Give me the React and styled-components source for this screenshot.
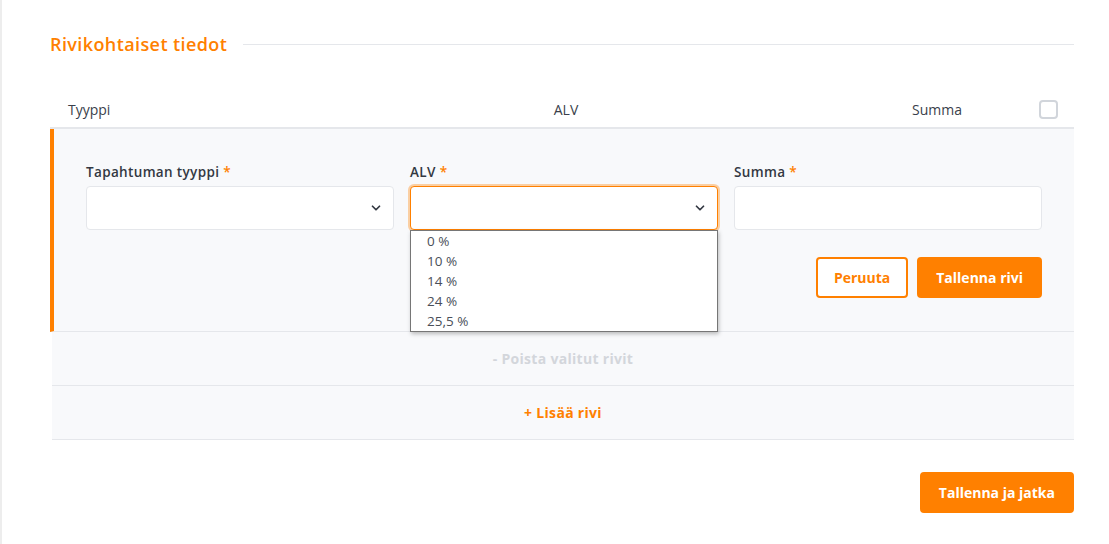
import React from "react";
import styled, { createGlobalStyle } from "styled-components";

const Global = createGlobalStyle`
  html, body { margin: 0; padding: 0; background: #fff; }
  body { font-family: "Open Sans", "Liberation Sans", sans-serif; color: #3a3f4b; }
  * { box-sizing: border-box; }
`;

const ORANGE = "#ff8000";

const Page = styled.div`
  min-height: 544px;
  border-left: 2px solid #ededed;
  padding: 32px 35px 30px 48px;
`;

const SectionTitle = styled.div`
  display: flex;
  align-items: center;
  gap: 16px;
  height: 24px;
`;

const TitleText = styled.h2`
  margin: 0;
  font-size: 18px;
  font-weight: 600;
  color: ${ORANGE};
  letter-spacing: 0.4px;
  white-space: nowrap;
`;

const TitleLine = styled.div`
  flex: 1;
  height: 1px;
  background: #e5e7eb;
`;

const Table = styled.div`
  margin-top: 39px;
`;

const HeadRow = styled.div`
  display: grid;
  grid-template-columns: 1fr 1fr 1fr 36px;
  align-items: center;
  height: 34px;
  padding-bottom: 4px;
  border-bottom: 2px solid #e5e7eb;
  padding-left: 18px;
  font-size: 14px;
  color: #3a3f4b;
`;

const HeadCell = styled.div`
  text-align: ${(p) => p.$align || "left"};
  padding-right: ${(p) => p.$pr || 0}px;
  padding-left: ${(p) => p.$pl || 0}px;
`;

const Checkbox = styled.span`
  display: block;
  width: 19px;
  height: 19px;
  border: 2px solid #d1d5db;
  border-radius: 4px;
  background: #fff;
  justify-self: end;
  margin-right: 16px;
`;

const EditRow = styled.div`
  background: #f8f9fb;
  border-left: 4px solid ${ORANGE};
  border-bottom: 1px solid #e5e7eb;
  padding: 35px 32px 33px 32px;
`;

const Fields = styled.div`
  display: grid;
  grid-template-columns: repeat(3, 1fr);
  gap: 16px;
`;

const Field = styled.div`
  display: flex;
  flex-direction: column;
  position: relative;
`;

const Label = styled.label`
  font-size: 13.5px;
  font-weight: 600;
  letter-spacing: 0.35px;
  color: #333842;
  height: 16px;
  line-height: 16px;
  margin-bottom: 6px;
`;

const Req = styled.span`
  color: ${ORANGE};
  margin-left: 4px;
`;

const Box = styled.div`
  height: 44px;
  background: #fff;
  border: 1px solid ${(p) => (p.$focus ? ORANGE : "#e5e7eb")};
  border-radius: 4px;
  box-shadow: ${(p) => (p.$focus ? "0 0 0 2px rgba(255,128,0,0.35)" : "none")};
  display: flex;
  align-items: center;
  justify-content: flex-end;
  padding-right: 10px;
`;

const Menu = styled.ul`
  position: absolute;
  top: 66px;
  left: 0;
  right: 0;
  margin: 0;
  padding: 0 0 0 16px;
  list-style: none;
  background: #fff;
  border: 1px solid #767676;
  box-shadow: 1px 2px 4px rgba(0,0,0,0.25);
  z-index: 5;
`;

const Option = styled.li`
  height: 20px;
  line-height: 20px;
  font-size: 13.5px;
  color: #4a4f59;
`;

const Actions = styled.div`
  display: flex;
  justify-content: flex-end;
  gap: 9px;
  margin-top: 27px;
`;

const Button = styled.button`
  height: 41px;
  padding: 0 ${(p) => p.$px || 18}px;
  border-radius: 4px;
  font-family: "Open Sans", "Liberation Sans", sans-serif;
  font-size: 14px;
  font-weight: 700;
  border: 2px solid ${ORANGE};
  background: ${(p) => (p.$primary ? ORANGE : "#fff")};
  color: ${(p) => (p.$primary ? "#fff" : ORANGE)};
  cursor: pointer;
`;

const LinkRow = styled.div`
  margin-left: 2px;
  height: 54px;
  background: #f8f9fb;
  border-bottom: 1px solid #e5e7eb;
  display: flex;
  align-items: center;
  justify-content: center;
  font-size: 14px;
  font-weight: 700;
  letter-spacing: 0.3px;
  color: ${(p) => (p.$muted ? "#d3d6db" : ORANGE)};
`;

const Footer = styled.div`
  display: flex;
  justify-content: flex-end;
  margin-top: 32px;
`;

const Chevron = () => (
  <svg width="14" height="14" viewBox="0 0 24 24" fill="none" stroke="#333842" strokeWidth="3" strokeLinecap="round" strokeLinejoin="round">
    <path d="M6 9l6 6 6-6" />
  </svg>
);

export default function App() {
  return (
    <>
      <Global />
      <Page>
        <SectionTitle>
          <TitleText>Rivikohtaiset tiedot</TitleText>
          <TitleLine />
        </SectionTitle>
        <Table>
          <HeadRow>
            <HeadCell>Tyyppi</HeadCell>
            <HeadCell $align="center" $pl={26}>ALV</HeadCell>
            <HeadCell $align="right" $pr={76}>Summa</HeadCell>
            <Checkbox />
          </HeadRow>
          <EditRow>
            <Fields>
              <Field>
                <Label>Tapahtuman tyyppi<Req>*</Req></Label>
                <Box><Chevron /></Box>
              </Field>
              <Field>
                <Label>ALV<Req>*</Req></Label>
                <Box $focus><Chevron /></Box>
                <Menu>
                  {["0 %", "10 %", "14 %", "24 %", "25,5 %"].map((o) => (
                    <Option key={o}>{o}</Option>
                  ))}
                </Menu>
              </Field>
              <Field>
                <Label>Summa<Req>*</Req></Label>
                <Box />
              </Field>
            </Fields>
            <Actions>
              <Button $px={16}>Peruuta</Button>
              <Button $primary $px={17}>Tallenna rivi</Button>
            </Actions>
          </EditRow>
          <LinkRow $muted>- Poista valitut rivit</LinkRow>
          <LinkRow>+ Lisää rivi</LinkRow>
        </Table>
        <Footer>
          <Button $primary $px={17}>Tallenna ja jatka</Button>
        </Footer>
      </Page>
    </>
  );
}
